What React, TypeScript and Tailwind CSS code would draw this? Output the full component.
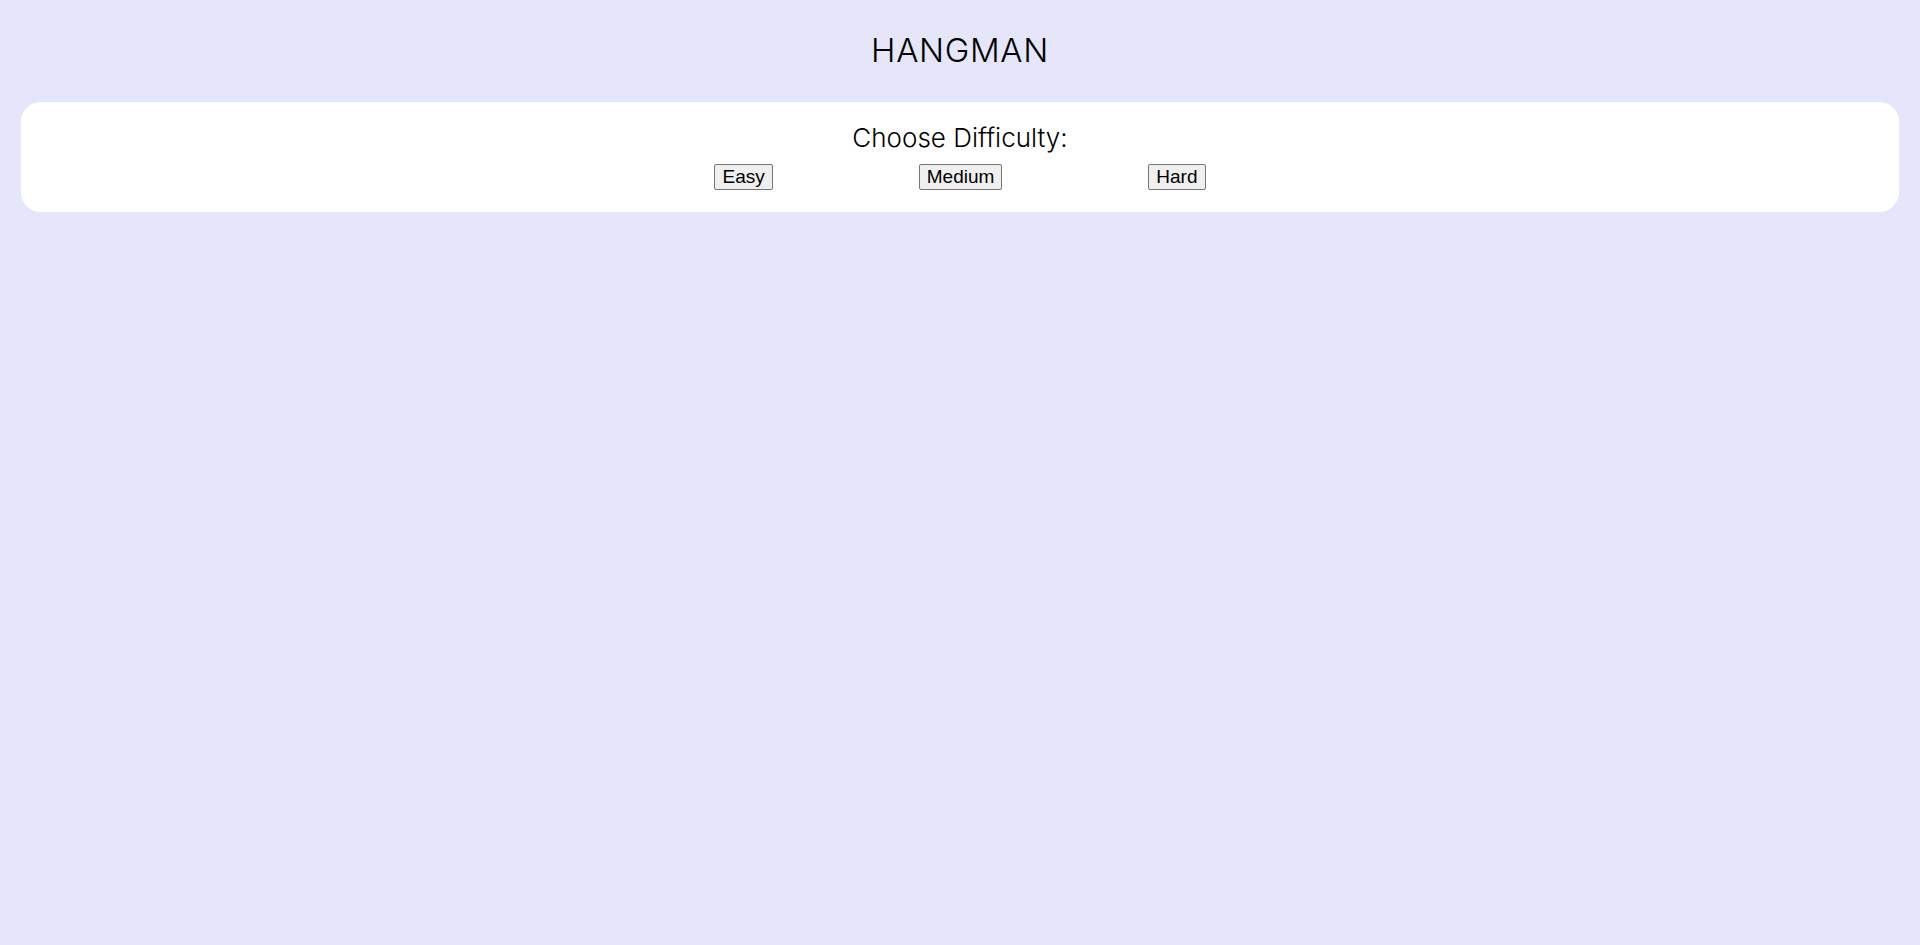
export default function App() {
  const levels = ["Easy", "Medium", "Hard"];

  return (
    <div className="min-h-screen bg-[#e6e6fa] pt-[28px]" style={{ fontFamily: "Inter, 'Open Sans', sans-serif" }}>
      {/* Title */}
      <h1 className="text-center text-[33px] font-light leading-[44px] tracking-[0.02em] text-black">HANGMAN</h1>

      {/* Difficulty card */}
      <div className="mx-[21px] mt-[30px] h-[110px] rounded-[20px] bg-white pt-[20px]">
        <h2 className="text-center text-[26px] font-light leading-[32px] text-black">Choose Difficulty:</h2>
        <div className="mt-[10px] flex justify-center gap-[146px]">
          {levels.map((l) => (
            <button
              key={l}
              className="h-[26px] rounded-[2px] border border-[#767676] bg-[#efefef] px-[7px] text-[19px] leading-[22px] text-black"
              style={{ fontFamily: "'Liberation Sans', Arial, sans-serif" }}
            >
              {l}
            </button>
          ))}
        </div>
      </div>
    </div>
  );
}
